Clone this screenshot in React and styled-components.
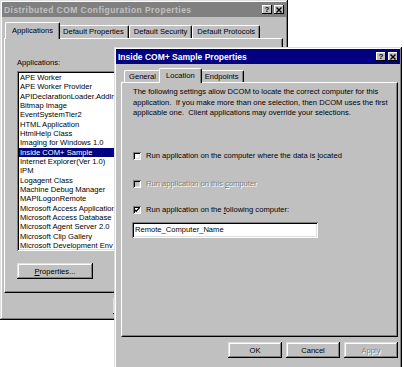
import React from "react";
import styled, { createGlobalStyle, css } from "styled-components";

const apps = [
  "APE Worker",
  "APE Worker Provider",
  "APIDeclarationLoader.Addln",
  "Bitmap Image",
  "EventSystemTier2",
  "HTML Application",
  "HtmlHelp Class",
  "Imaging for Windows 1.0",
  "Inside COM+ Sample",
  "Internet Explorer(Ver 1.0)",
  "IPM",
  "Logagent Class",
  "Machine Debug Manager",
  "MAPILogonRemote",
  "Microsoft Access Application",
  "Microsoft Access Database",
  "Microsoft Agent Server 2.0",
  "Microsoft Clip Gallery",
  "Microsoft Development Env",
];

function App() {
  return (
    <>
      <GlobalStyle />
      <Desktop>
        <Window $left={0} $top={0} $width={288} $height={320}>
          <TitleBar $size={8.5} $spacing={0.45}>
            <span>Distributed COM Configuration Properties</span>
            <TitleButtons />
          </TitleBar>
          <TabStrip $gap={5} $inset={5}>
            <Tab $active $h={17}>Applications</Tab>
            <Tab $h={13}>Default Properties</Tab>
            <Tab $h={13}>Default Security</Tab>
            <Tab $h={13}>Default Protocols</Tab>
          </TabStrip>
          <Panel $left={2} $right={3}>
            <BackContent>
              <Label>Applications:</Label>
              <ListBox>
                {apps.map((a, i) => (
                  <ListItem key={a} $selected={i === 8}>{a}</ListItem>
                ))}
              </ListBox>
              <Button $width={76}>
                <u>P</u>roperties...
              </Button>
            </BackContent>
          </Panel>
          <ButtonRow $right={3}>
            <Button>OK</Button>
            <Button>Cancel</Button>
            <Button $disabled>Apply</Button>
          </ButtonRow>
        </Window>

        <Window $left={114} $top={47} $width={288} $height={322}>
          <TitleBar $active $size={8.5}>
            <span>Inside COM+ Sample Properties</span>
            <TitleButtons />
          </TitleBar>
          <TabStrip $gap={4} $inset={8}>
            <Tab $h={12}>General</Tab>
            <Tab $active $h={15}>Location</Tab>
            <Tab $h={12}>Endpoints</Tab>
          </TabStrip>
          <Panel $left={5} $right={2}>
            <FrontContent>
              <Paragraph>
                The following settings allow DCOM to locate the correct computer for this
                <br />
                application.&nbsp; If you make more than one selection, then DCOM uses the first
                <br />
                applicable one.&nbsp; Client applications may override your selections.
              </Paragraph>
              <CheckRow $gap={32}>
                <CheckBox />
                <span>Run application on the computer where the data is <u>l</u>ocated</span>
              </CheckRow>
              <CheckRow $gap={18} $disabled>
                <CheckBox $disabled />
                <span>Run application on this <u>c</u>omputer</span>
              </CheckRow>
              <CheckRow $gap={16}>
                <CheckBox $checked />
                <span>Run application on the <u>f</u>ollowing computer:</span>
              </CheckRow>
              <TextField>Remote_Computer_Name</TextField>
            </FrontContent>
          </Panel>
          <ButtonRow $right={2}>
            <Button>OK</Button>
            <Button>Cancel</Button>
            <Button $disabled>Apply</Button>
          </ButtonRow>
        </Window>
      </Desktop>
    </>
  );
}

function TitleButtons() {
  return (
    <CaptionButtons>
      <CaptionButton>?</CaptionButton>
      <CaptionButton>
        <svg width="6" height="6" viewBox="0 0 6 6">
          <path d="M0.5 0.5 L5.5 5.5 M5.5 0.5 L0.5 5.5" stroke="#000" strokeWidth="1.4" />
        </svg>
      </CaptionButton>
    </CaptionButtons>
  );
}

function CheckBox({ $checked, $disabled }) {
  return (
    <Box $disabled={$disabled}>
      {$checked && (
        <svg width="6" height="6" viewBox="0 0 6 6">
          <path d="M0.6 2.6 L2.2 4.3 L5.4 0.9" stroke="#000" strokeWidth="1.3" fill="none" />
        </svg>
      )}
    </Box>
  );
}

export default App;

const GlobalStyle = createGlobalStyle`
  html, body {
    margin: 0;
    padding: 0;
    background: #fff;
  }
  body {
    font-family: "Liberation Sans", Arial, sans-serif;
    font-size: 7.6px;
    color: #000;
  }
`;

const raised = css`
  box-shadow: inset -1px -1px #000, inset 1px 1px #dfdfdf,
    inset -2px -2px #808080, inset 2px 2px #fff;
`;

const sunken = css`
  box-shadow: inset 1px 1px #808080, inset -1px -1px #fff,
    inset 2px 2px #000, inset -2px -2px #dfdfdf;
`;

const Desktop = styled.div`
  position: relative;
  width: 404px;
  height: 367px;
  overflow: hidden;
  background: #fff;
`;

const Window = styled.div`
  position: absolute;
  left: ${(p) => p.$left}px;
  top: ${(p) => p.$top}px;
  width: ${(p) => p.$width}px;
  height: ${(p) => p.$height}px;
  box-sizing: border-box;
  padding: 2px;
  background: #c0c0c0;
  display: flex;
  flex-direction: column;
  ${raised}
`;

const TitleBar = styled.div`
  height: 15px;
  flex: none;
  display: flex;
  align-items: center;
  justify-content: space-between;
  padding: 0 2px 0 2px;
  background: ${(p) => (p.$active ? "#000080" : "#808080")};
  color: ${(p) => (p.$active ? "#fff" : "#c0c0c0")};
  font-weight: bold;
  font-size: ${(p) => p.$size}px;
  letter-spacing: ${(p) => p.$spacing || 0}px;
  white-space: nowrap;
`;

const CaptionButtons = styled.div`
  display: flex;
  gap: 2px;
`;

const CaptionButton = styled.div`
  width: 10px;
  height: 9px;
  box-sizing: border-box;
  background: #c0c0c0;
  color: #000;
  font-size: 8px;
  font-weight: bold;
  letter-spacing: 0;
  display: flex;
  align-items: center;
  justify-content: center;
  box-shadow: inset -1px -1px #000, inset 1px 1px #fff;
`;

const TabStrip = styled.div`
  display: flex;
  align-items: flex-end;
  margin-top: ${(p) => p.$gap}px;
  padding-left: ${(p) => p.$inset}px;
  position: relative;
  z-index: 1;
`;

const Tab = styled.div`
  height: ${(p) => p.$h}px;
  box-sizing: border-box;
  padding: 0 ${(p) => (p.$active ? 6 : 4)}px 1px;
  margin: 0 ${(p) => (p.$active ? -2 : 0)}px ${(p) => (p.$active ? -1 : 0)}px;
  border-top: 1px solid #fff;
  border-left: 1px solid #fff;
  border-right: 1px solid #000;
  border-radius: 2px 2px 0 0;
  box-shadow: inset -1px 0 #808080;
  background: #c0c0c0;
  display: flex;
  align-items: center;
  white-space: nowrap;
  position: relative;
  z-index: ${(p) => (p.$active ? 2 : 0)};
`;

const Panel = styled.div`
  height: 255px;
  flex: none;
  box-sizing: border-box;
  margin: 0 ${(p) => p.$right}px 0 ${(p) => p.$left}px;
  border-top: 1px solid #fff;
  border-left: 1px solid #fff;
  border-right: 1px solid #000;
  border-bottom: 1px solid #000;
  box-shadow: inset -1px -1px #808080;
  overflow: hidden;
`;

const BackContent = styled.div`
  padding: 19px 0 0 12px;
  display: flex;
  flex-direction: column;
  align-items: flex-start;
`;

const Label = styled.div`
  line-height: 9px;
  margin-bottom: 4px;
`;

const ListBox = styled.div`
  width: 255px;
  height: 180px;
  box-sizing: border-box;
  padding: 2px;
  background: #fff;
  overflow: hidden;
  margin-bottom: 12px;
  ${sunken}
`;

const ListItem = styled.div`
  height: 9.33px;
  line-height: 9.33px;
  padding-left: 1px;
  white-space: nowrap;
  background: ${(p) => (p.$selected ? "#000080" : "transparent")};
  color: ${(p) => (p.$selected ? "#fff" : "#000")};
`;

const ButtonRow = styled.div`
  display: flex;
  justify-content: flex-end;
  gap: 4px;
  margin: 5px ${(p) => p.$right}px 0 0;
`;

const Button = styled.div`
  width: ${(p) => p.$width || 54}px;
  height: 16px;
  box-sizing: border-box;
  display: flex;
  align-items: center;
  justify-content: center;
  background: #c0c0c0;
  color: ${(p) => (p.$disabled ? "#808080" : "#000")};
  text-shadow: ${(p) => (p.$disabled ? "1px 1px #fff" : "none")};
  ${raised}
`;

const FrontContent = styled.div`
  padding: 4px 0 0 11px;
  display: flex;
  flex-direction: column;
  align-items: flex-start;
`;

const Paragraph = styled.p`
  margin: 0;
  line-height: 10.5px;
  white-space: nowrap;
`;

const CheckRow = styled.div`
  display: flex;
  align-items: center;
  gap: 5px;
  height: 10px;
  margin-top: ${(p) => p.$gap}px;
  color: ${(p) => (p.$disabled ? "#808080" : "#000")};
  text-shadow: ${(p) => (p.$disabled ? "1px 1px #fff" : "none")};
  white-space: nowrap;
`;

const Box = styled.div`
  width: 8px;
  height: 8px;
  flex: none;
  box-sizing: border-box;
  display: flex;
  align-items: center;
  justify-content: center;
  background: ${(p) => (p.$disabled ? "#c0c0c0" : "#fff")};
  box-shadow: inset 1px 1px #808080, inset -1px -1px #fff,
    inset 2px 2px #000, inset -2px -2px #dfdfdf;
`;

const TextField = styled.div`
  width: 186px;
  height: 16px;
  box-sizing: border-box;
  margin: 7px 0 0 -1px;
  padding: 0 3px;
  display: flex;
  align-items: center;
  background: #fff;
  white-space: nowrap;
  ${sunken}
`;
